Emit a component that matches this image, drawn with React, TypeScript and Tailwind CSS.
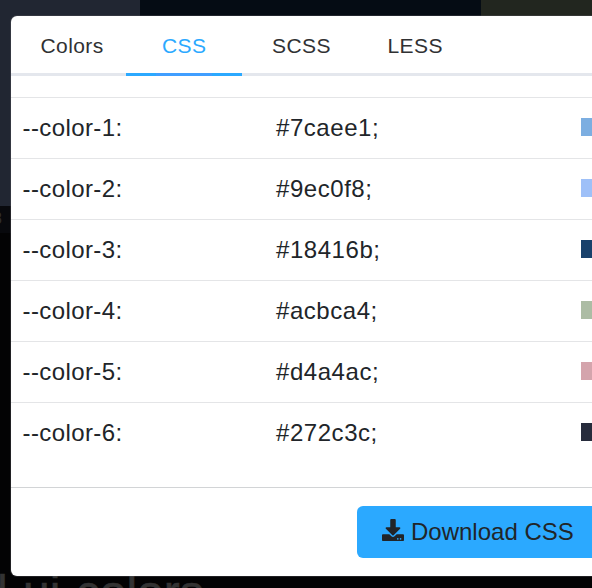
import { FaDownload } from "react-icons/fa";

const colors = [
  { name: "--color-1:", value: "#7caee1;", swatch: "bg-[#7caee1]" },
  { name: "--color-2:", value: "#9ec0f8;", swatch: "bg-[#9ec0f8]" },
  { name: "--color-3:", value: "#18416b;", swatch: "bg-[#18416b]" },
  { name: "--color-4:", value: "#acbca4;", swatch: "bg-[#acbca4]" },
  { name: "--color-5:", value: "#d4a4ac;", swatch: "bg-[#d4a4ac]" },
  { name: "--color-6:", value: "#272c3c;", swatch: "bg-[#272c3c]" },
];

const tabs = [
  { label: "Colors", width: "w-[115px] pl-[29.5px]" },
  { label: "CSS", width: "w-[116px] pl-[36px]" },
  { label: "SCSS", width: "w-[116px] pl-[30px]" },
  { label: "LESS", width: "w-[116px] pl-[29.5px]" },
];

function Backdrop() {
  return (
    <div className="flex h-full flex-col bg-[#030304]">
      <div className="flex h-[206px] shrink-0">
        <div className="w-[140px] bg-[#212632]" />
        <div className="w-[341px] bg-[#050c14]" />
        <div className="flex-1 bg-[#22261f]" />
      </div>
      <div className="h-[27px] shrink-0 bg-[#08090d]">
        <span className="-ml-[7px] block text-[16px] leading-[26px] text-[#303030]">8</span>
      </div>
      <h2 className="-ml-[19px] mt-[332px] h-[23px] shrink-0 whitespace-nowrap text-[48px] leading-[56px] text-[#333] [-webkit-text-stroke:0.6px_#333] [word-spacing:2px]">
        d ui colors
      </h2>
    </div>
  );
}

function Dialog() {
  return (
    <section className="absolute left-[11px] top-4 flex h-[560px] w-[640px] flex-col rounded-[6px] bg-white text-[#212529] shadow-[0_0_0_1px_rgba(90,90,95,0.35)]">
      <nav className="flex h-[60px] shrink-0 border-b-[3px] border-[#e4e7ed] text-[21px] leading-[60px] tracking-[0.4px]">
        {tabs.map((tab) => (
          <button
            key={tab.label}
            className={`flex h-[60px] shrink-0 flex-col text-left ${tab.width} ${tab.label === "CSS" ? "text-[#2ba9ff]" : "text-[#303133]"}`}
          >
            <span className="h-[57px]">{tab.label}</span>
            {tab.label === "CSS" && (
              <span className="-ml-[36px] flex h-[3px] w-[116px] shrink-0 bg-[#2ba9ff] pl-[30px]">
                <span className="w-[56px] bg-[#409eff]" />
              </span>
            )}
          </button>
        ))}
      </nav>
      <div className="h-[412px] shrink-0 border-b border-[#d2d4d6] pt-[21px]">
        {colors.map((color) => (
          <div key={color.name} className="flex h-[61px] items-center border-t border-[#e4e5e7] text-2xl">
            <span className="w-[265px] pl-[11.5px] tracking-[0.4px]">{color.name}</span>
            <span className="w-[305px] tracking-[0.55px]">{color.value}</span>
            <span className={`mb-[3px] h-[18px] w-[48px] ${color.swatch}`} />
          </div>
        ))}
      </div>
      <footer className="flex flex-1 items-center pl-[346px]">
        <button className="flex h-[52px] w-[242px] items-center rounded-[6px] bg-[#2ba9ff] pl-[25px] text-2xl">
          <FaDownload className="-mt-1 mr-[7px] size-[22px]" />
          <span className="whitespace-nowrap">Download CSS</span>
        </button>
      </footer>
    </section>
  );
}

export default function App() {
  return (
    <main className="relative h-[588px] w-[592px] overflow-hidden font-['Liberation_Sans',Arial,sans-serif]">
      <Backdrop />
      <Dialog />
    </main>
  );
}
